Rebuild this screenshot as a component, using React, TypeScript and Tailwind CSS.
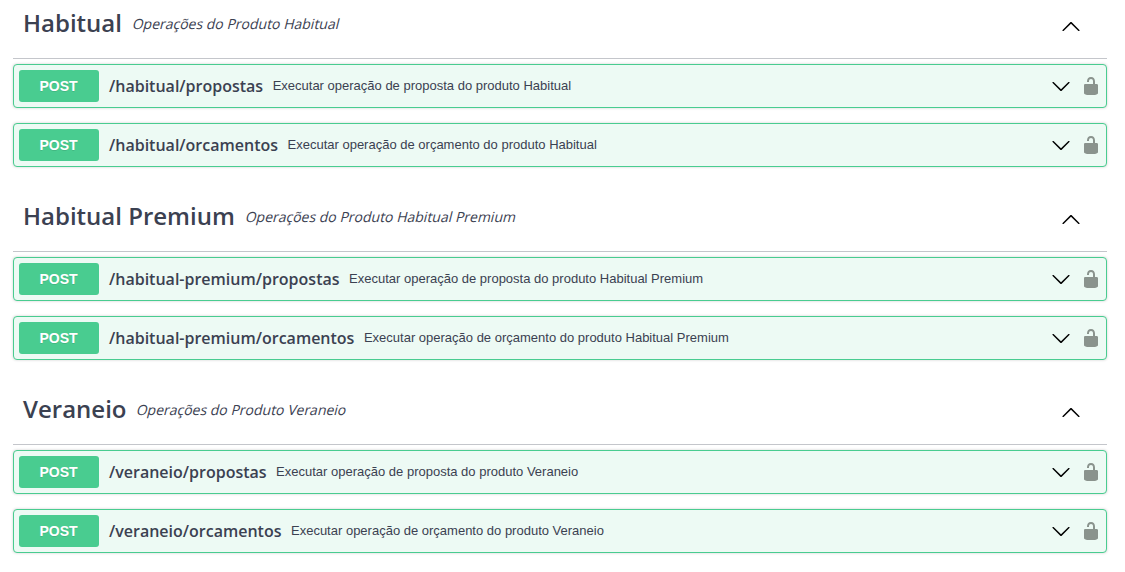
const sections = [
  {
    title: "Habitual",
    sub: "Operações do Produto Habitual",
    ops: [
      ["/habitual", "/propostas", "Executar operação de proposta do produto Habitual"],
      ["/habitual", "/orcamentos", "Executar operação de orçamento do produto Habitual"],
    ],
  },
  {
    title: "Habitual Premium",
    sub: "Operações do Produto Habitual Premium",
    ops: [
      ["/habitual-premium", "/propostas", "Executar operação de proposta do produto Habitual Premium"],
      ["/habitual-premium", "/orcamentos", "Executar operação de orçamento do produto Habitual Premium"],
    ],
  },
  {
    title: "Veraneio",
    sub: "Operações do Produto Veraneio",
    ops: [
      ["/veraneio", "/propostas", "Executar operação de proposta do produto Veraneio"],
      ["/veraneio", "/orcamentos", "Executar operação de orçamento do produto Veraneio"],
    ],
  },
];

function Chevron({ up }: { up?: boolean }) {
  return (
    <svg width="20" height="20" viewBox="0 0 20 20" fill="#000" className={up ? "rotate-180" : ""}>
      <path d="M17.418 6.109c.272-.268.709-.268.979 0s.271.701 0 .969l-7.908 7.83c-.27.268-.707.268-.979 0l-7.908-7.83c-.27-.268-.27-.701 0-.969.271-.268.709-.268.979 0L10 13.25l7.418-7.141z" />
    </svg>
  );
}

function Lock() {
  return (
    <svg width="20" height="20" viewBox="0 0 20 20" fill="#8a938d">
      <path d="M15.8 8H14V5.6C14 2.703 12.665 1 10 1 7.334 1 6 2.703 6 5.6V6h2v-.801C8 3.754 8.797 3 10 3c1.203 0 2 .754 2 2.199V8H4c-.553 0-1 .646-1 1.199V17c0 .549.428 1.139.951 1.307l1.197.387C5.672 18.861 6.45 19 7 19h6c.55 0 1.328-.139 1.852-.307l1.197-.387c.523-.168.951-.758.951-1.307V9.199C17 8.646 16.352 8 15.8 8z" />
    </svg>
  );
}

export default function App() {
  return (
    <div className="mt-[-11px] ml-[13px] w-[1094px] text-[#3b4151] font-['Open_Sans',sans-serif]">
      {sections.map((s) => (
        <section key={s.title}>
          <div className="mb-[5px] flex h-[70px] items-center border-b border-[#c4c6cb] pl-[10px] pr-[26px]">
            <h3 className="text-[24px] font-semibold -translate-y-[1px]">{s.title}</h3>
            <div className="flex-1 -translate-y-[1px] px-[10px]">
              <p className="inline-block origin-[0_70%] -skew-x-[14deg] text-[14px] font-normal">{s.sub}</p>
            </div>
            <span className="translate-y-[3px]">
              <Chevron up />
            </span>
          </div>
          {s.ops.map(([base, leaf, desc]) => (
            <div
              key={base + leaf}
              className="mb-[15px] flex items-center rounded-[4px] border border-[#49cc90] bg-[#edfaf4] p-[5px] shadow-[0_0_3px_rgba(0,0,0,0.19)]"
            >
              <span className="w-[80px] rounded-[3px] bg-[#49cc90] py-[6px] pr-[1px] text-center font-['Liberation_Sans',sans-serif] text-[14px] leading-[20px] font-bold text-white [text-shadow:0_1px_0_rgba(0,0,0,0.1)]">
                POST
              </span>
              <span className="pl-[10px] pr-[9.5px] text-[16px] leading-[20px] font-semibold">
                {base}
                <wbr />
                {leaf}
              </span>
              <span className="flex-1 font-['Liberation_Sans',sans-serif] text-[13px] leading-[20px]">{desc}</span>
              <span className="mr-[10px]">
                <Chevron />
              </span>
              <span>
                <Lock />
              </span>
            </div>
          ))}
        </section>
      ))}
    </div>
  );
}
